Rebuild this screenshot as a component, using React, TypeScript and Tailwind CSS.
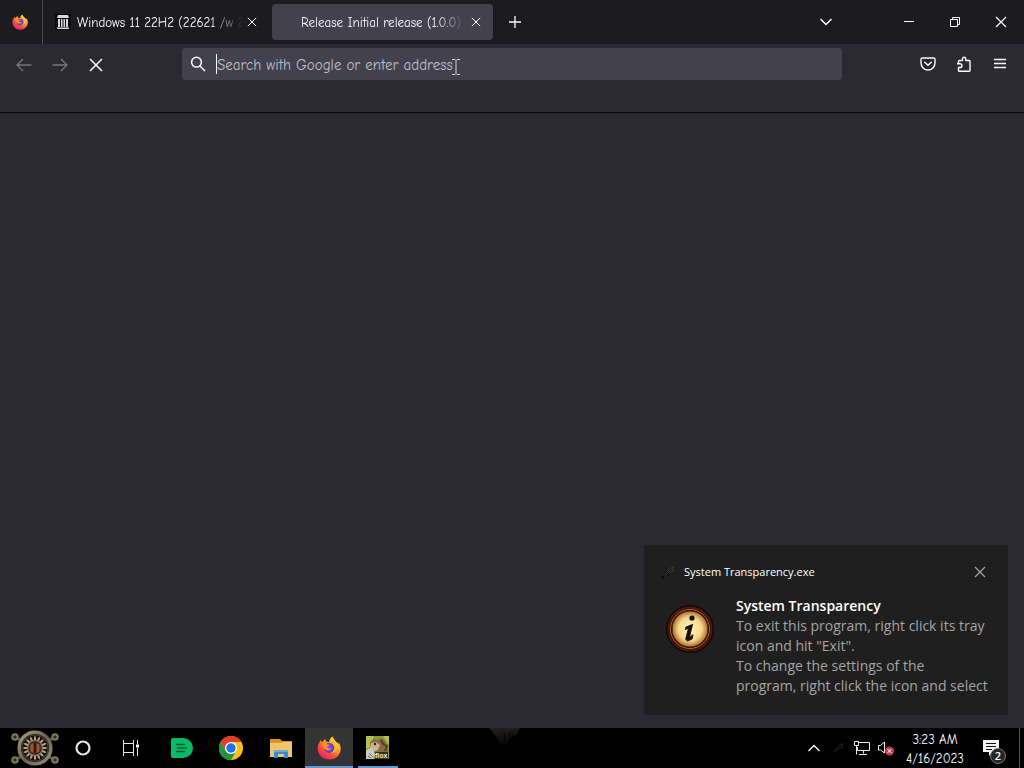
import React, { type ReactNode } from "react";

const cogTeeth = Array.from({ length: 16 }, (_, i) => i * 22.5);

function FirefoxLogo({ id, className }: { id: string; className: string }) {
  return (
    <svg viewBox="0 0 24 24" className={className} aria-hidden="true">
      <defs>
        <linearGradient id={`${id}-flame`} x1="0.85" y1="0.05" x2="0.2" y2="0.95">
          <stop offset="0" stopColor="#ffe545" />
          <stop offset="0.35" stopColor="#ffa52c" />
          <stop offset="0.65" stopColor="#fb5637" />
          <stop offset="1" stopColor="#e61f6b" />
        </linearGradient>
        <radialGradient id={`${id}-globe`}>
          <stop offset="0" stopColor="#8a52e8" />
          <stop offset="1" stopColor="#5a3cc4" />
        </radialGradient>
      </defs>
      <path
        d="M15.3.6c1.3 2 2 3 3 4.100 1.300 1.300 2.400 2 3.200 3.300.3-.6.200-1.200 0-1.800 1.500 1.900 2.200 4.300 2.200 6.500 0 6-5 10.800-11.500 10.800C5.700 23.500.700 18.700.700 12.700c0-2.700.7-5 2.100-6.600l.4-2 1.500 1.700 1.400-.3C6.500 4.300 7.300 3.400 8.300 2.700c-.1 1.500.5 2.600 1.700 3.100l2 .5C12.500 4 13.300 2 15.300.6Z"
        fill={`url(#${id}-flame)`}
      />
      <circle cx="12.200" cy="12" r="5" fill={`url(#${id}-globe)`} />
      <path
        d="M4.500 8.500c1.500-1.300 3.800-1.500 5.600-.3l2.500.5c-.2 1.300-1.900 1.500-2.400 2.400.2 1.600 2.700 1.700 4.200.9-.8 2.200-3.200 3-5.200 2.100-2.700-1-3.300-3.800-4.700-5.600Z"
        fill="#ff8b29"
      />
      <path
        d="M14 6.500c2.800.5 4.600 3.200 3.800 6.100-.5 2.300-2.200 3.700-4.200 4.300 3.500.2 6.500-2 7-5.600.4-3.200-1.600-5.400-4-7.200Z"
        fill="#ffc633"
        opacity="0.75"
      />
    </svg>
  );
}

function ChromeLogo() {
  return (
    <svg viewBox="0 0 24 24" className="size-6" aria-hidden="true">
      <circle cx="12" cy="12" r="12" fill="#fbc116" />
      <path d="M12 6h10.400A12 12 0 0 0 1.600 6l5.200 9Z" fill="#e33b2e" />
      <path d="M1.600 6A12 12 0 0 0 12 24l5.200-9L12 17l-5.200-2Z" fill="#229342" />
      <circle cx="12" cy="12" r="6" fill="#fff" />
      <circle cx="12" cy="12" r="4.700" fill="#1a73e8" />
    </svg>
  );
}

function StartEmblem() {
  return (
    <svg viewBox="0 0 50 38" className="h-[38px] w-[50px]" aria-hidden="true">
      <defs>
        <linearGradient id="brass" x1="0" y1="0" x2="1" y2="1">
          <stop offset="0" stopColor="#aaa088" />
          <stop offset="0.5" stopColor="#685f4e" />
          <stop offset="1" stopColor="#9a9078" />
        </linearGradient>
      </defs>
      <path d="m5 8 40 23M45 8 5 31" stroke="#554d3b" strokeWidth="3" />
      {[[5, 8], [45, 8], [5, 31], [45, 31]].map(([x, y]) => (
        <g key={`${x}-${y}`}>
          <circle cx={x} cy={y} r="3.800" fill="#777455" />
          <circle cx={x} cy={y} r="2.300" fill="#273323" stroke="#8f8a5e" />
        </g>
      ))}
      <circle cx="25" cy="19" r="15.800" fill="#17120d" stroke="url(#brass)" strokeWidth="3.500" />
      <circle cx="25" cy="19" r="13.200" fill="none" stroke="#4c453a" />
      {cogTeeth.map((angle) => (
        <path key={angle} d="m24 8.500 1-2 1 2v3.500h-2Z" fill="#b5a88a" transform={`rotate(${angle} 25 19)`} />
      ))}
      <circle cx="25" cy="19" r="7.500" fill="#241b14" stroke="#85765c" strokeWidth="1.500" />
      <circle cx="25" cy="19" r="5.800" fill="#7c3d27" />
      <path d="M22 15v8M28 15v8" stroke="#a45e3e" strokeWidth="1.500" />
      <path d="M25 13.500v11" stroke="#2c1812" strokeWidth="2" />
    </svg>
  );
}

function InfoBadge() {
  return (
    <svg viewBox="0 0 50 50" className="size-[50px]" aria-hidden="true">
      <defs>
        <radialGradient id="parchment">
          <stop offset="0" stopColor="#fff6be" />
          <stop offset="0.65" stopColor="#f5d88a" />
          <stop offset="1" stopColor="#ab6c2d" />
        </radialGradient>
      </defs>
      <circle cx="25" cy="25" r="24" fill="#120706" />
      <circle cx="25" cy="25" r="21.500" fill="#2b0d05" stroke="#4a1a0d" strokeWidth="2" />
      <circle cx="25" cy="25" r="19.500" fill="none" stroke="#b0672f" />
      <circle cx="25" cy="25" r="18" fill="url(#parchment)" stroke="#43190a" />
      <circle cx="27" cy="14" r="2.600" fill="#1b1009" />
      <path d="m21 23 6.500-2.500-3.200 13.200 3.700-3-1 4.300-4.500 2-1.800-1.700 2.800-11.100-3.200 1.200Z" fill="#1b1009" stroke="#1b1009" strokeWidth="1" strokeLinejoin="round" />
    </svg>
  );
}

function Wrench({ className }: { className: string }) {
  return (
    <svg viewBox="0 0 16 16" className={className} aria-hidden="true">
      <path d="m2.500 13 5-4" stroke="#080808" strokeWidth="3" strokeLinecap="round" />
      <path d="m3 12 5-4.500 1.500-3L14 3l-2.500 3 2 1-3 1.500L9 8l-5 5" fill="none" stroke="#3a3a3a" />
    </svg>
  );
}

function Cross({ className }: { className: string }) {
  return (
    <svg viewBox="0 0 12 12" className={className} fill="none" stroke="currentColor" strokeWidth="1.200" aria-hidden="true">
      <path d="m1 1 10 10M11 1 1 11" />
    </svg>
  );
}

function IconButton({ label, className, children }: { label: string; className: string; children: ReactNode }) {
  return (
    <button type="button" aria-label={label} className={`flex shrink-0 items-center justify-center ${className}`}>
      {children}
    </button>
  );
}

function TabStrip() {
  return (
    <header className="flex h-11 shrink-0 items-center bg-[#1c1b20] text-[#fbfbfe]">
      <IconButton label="Firefox View" className="h-11 w-10">
        <FirefoxLogo id="view" className="size-4" />
      </IconButton>
      <div className="ml-0.5 h-11 w-px shrink-0 bg-[#4c4b52]" />
      <div className="ml-1 flex h-9 w-[221px] shrink-0 items-center pl-2">
        <svg viewBox="0 0 16 16" className="size-4 shrink-0" aria-hidden="true">
          <path fill="#09090b" d="M0 0h16v16H0z" />
          <path fill="#d8d8da" d="M3 1h10l1 3H2ZM3 5h2v8H3ZM6 5h1.500v8H6ZM8.500 5H10v8H8.500ZM11 5h2v8h-2ZM2 13.500h12V15H2Z" />
        </svg>
        <span className="ml-1.5 w-[167px] overflow-hidden pt-0.5 text-[13px] font-medium whitespace-nowrap [mask-image:linear-gradient(to_right,black_78%,transparent)]">
          Windows 11 22H2 (22621 /w 2
        </span>
        <IconButton label="Close tab" className="size-4"><Cross className="size-2.5" /></IconButton>
      </div>
      <div className="ml-1 flex h-9 w-[221px] shrink-0 items-center rounded bg-[#42414d] pl-[29px]">
        <span className="w-[165px] overflow-hidden pt-0.5 text-[13px] font-medium whitespace-nowrap [mask-image:linear-gradient(to_right,black_82%,transparent)]">
          Release Initial release (1.0.0)
        </span>
        <IconButton label="Close tab" className="size-5"><Cross className="size-2.5" /></IconButton>
      </div>
      <IconButton label="New tab" className="ml-1 size-9">
        <svg viewBox="0 0 12 12" className="size-3" stroke="currentColor" aria-hidden="true"><path d="M6 0v12M0 6h12" strokeWidth="1.300" /></svg>
      </IconButton>
      <div className="flex-1" />
      <IconButton label="List all tabs" className="mr-[42px] size-9">
        <svg viewBox="0 0 12 8" className="h-2 w-3" fill="none" stroke="currentColor" strokeWidth="1.500" aria-hidden="true"><path d="m.5 1 5.500 5.500L11.500 1" /></svg>
      </IconButton>
      <IconButton label="Minimize" className="h-11 w-[46px]">
        <svg viewBox="0 0 10 10" className="size-2.5" stroke="currentColor" aria-hidden="true"><path d="M0 4.500h10" /></svg>
      </IconButton>
      <IconButton label="Restore" className="h-11 w-[46px]">
        <svg viewBox="0 0 10 10" className="size-2.5" fill="none" stroke="currentColor" aria-hidden="true"><path d="M.5 2.500h7v7h-7ZM2.500 2.500v-2h7v7h-2" /></svg>
      </IconButton>
      <IconButton label="Close" className="h-11 w-[46px]"><Cross className="size-3" /></IconButton>
    </header>
  );
}

function Toolbar() {
  return (
    <nav className="flex h-[69px] shrink-0 items-start border-b border-[#09090b] bg-[#2b2a33] px-1.5 pt-1 text-[#fbfbfe]">
      <IconButton label="Back" className="h-[34px] w-9 text-[#77767d]">
        <svg viewBox="0 0 16 16" className="size-4" fill="none" stroke="currentColor" strokeWidth="1.300" aria-hidden="true"><path d="M15.500 8H1M7 2 1 8l6 6" /></svg>
      </IconButton>
      <IconButton label="Forward" className="h-[34px] w-9 text-[#77767d]">
        <svg viewBox="0 0 16 16" className="size-4" fill="none" stroke="currentColor" strokeWidth="1.300" aria-hidden="true"><path d="M.5 8H15M9 2l6 6-6 6" /></svg>
      </IconButton>
      <IconButton label="Stop" className="h-[34px] w-9">
        <svg viewBox="0 0 14 14" className="size-3.5" stroke="currentColor" strokeWidth="1.500" aria-hidden="true"><path d="m1 1 12 12M13 1 1 13" /></svg>
      </IconButton>
      <div className="relative mr-[68px] ml-[68px] flex h-8 min-w-0 flex-1 items-center rounded bg-[#42414d] pl-2">
        <svg viewBox="0 0 16 16" className="size-4 shrink-0" fill="none" stroke="currentColor" strokeWidth="1.500" aria-hidden="true"><circle cx="6.500" cy="6.200" r="4.900" /><path d="m10 10 5 5" /></svg>
        <span className="ml-2.5 h-5 w-px shrink-0 bg-white" />
        <input
          type="text"
          aria-label="Search with Google or enter address"
          placeholder="Search with Google or enter address"
          className="h-8 min-w-0 flex-1 bg-transparent pt-0.5 text-[15px] font-medium outline-none placeholder:text-[#bfbec5]"
        />
        <svg viewBox="0 0 8 16" className="absolute top-[11px] left-[270px] h-4 w-2" fill="none" stroke="#d4d3d8" aria-hidden="true"><path d="M0 .5h3l1 1 1-1h3M4 1.500v13M0 15.500h3l1-1 1 1h3" /></svg>
      </div>
      <IconButton label="Save to Pocket" className="h-8 w-9">
        <svg viewBox="0 0 16 16" className="size-4" fill="none" stroke="currentColor" strokeWidth="1.400" strokeLinejoin="round" strokeLinecap="round" aria-hidden="true"><path d="M2.300 2h11.400q1.300 0 1.300 1.300V7a7 7 0 0 1-14 0V3.300Q1 2 2.300 2ZM4.700 6.300 8 9.300l3.300-3" /></svg>
      </IconButton>
      <IconButton label="Extensions" className="h-8 w-9">
        <svg viewBox="0 0 16 16" className="size-4" fill="none" stroke="currentColor" strokeWidth="1.400" strokeLinejoin="round" aria-hidden="true"><path d="M2.500 7.500V5.300q0-.8.800-.8H6.500V2.800a1.600 1.600 0 0 1 3.200 0v1.700h3.500q.8 0 .8.800v9q0 .900-.8.900H3.300q-.8 0-.8-.8V11.500h1.600a1.800 1.800 0 0 0 0-3.700H1" /></svg>
      </IconButton>
      <IconButton label="Application menu" className="h-8 w-9">
        <svg viewBox="0 0 12 12" className="size-3" stroke="currentColor" aria-hidden="true"><path d="M0 1.500h12M0 5.500h12M0 9.500h12" strokeWidth="1.300" /></svg>
      </IconButton>
    </nav>
  );
}

function Notification() {
  return (
    <aside className="absolute right-4 bottom-[13px] h-[170px] w-[364px] bg-[#1f1f1f] px-4 pt-4 font-['Segoe_UI','Open_Sans',sans-serif]">
      <div className="flex h-[22px] items-center">
        <Wrench className="size-4" />
        <span className="ml-2 flex-1 text-[11px] text-white">System Transparency.exe</span>
        <IconButton label="Dismiss" className="size-6 text-[#a7a7a7]"><Cross className="size-3" /></IconButton>
      </div>
      <div className="mt-[13px] flex">
        <div className="mt-2 ml-[5px] shrink-0"><InfoBadge /></div>
        <div className="ml-[21px] text-[14px] leading-5 whitespace-nowrap text-[#a5a5a5]">
          <h2 className="font-semibold text-white">System Transparency</h2>
          <p>To exit this program, right click its tray<br />icon and hit "Exit".</p>
          <p>To change the settings of the<br />program, right click the icon and select</p>
        </div>
      </div>
    </aside>
  );
}

function Taskbar() {
  return (
    <footer className="relative flex h-10 shrink-0 items-center bg-black text-white">
      <svg viewBox="0 0 34 24" className="absolute top-0 left-[489px] h-6 w-[34px]" aria-hidden="true">
        <defs>
          <linearGradient id="paw" x1="0" y1="0" x2="0.3" y2="1">
            <stop offset="0" stopColor="#26221e" />
            <stop offset="1" stopColor="#050404" />
          </linearGradient>
        </defs>
        <path d="M0 0h31l-3 7-7 3-5 9-4-3L5 6Z" fill="url(#paw)" />
        <path d="m15 5 1 13M22 2l-2 7" stroke="#060504" />
      </svg>
      <IconButton label="Start" className="h-10 w-[62px] pl-2"><StartEmblem /></IconButton>
      <IconButton label="Cortana" className="h-10 w-[42px]">
        <svg viewBox="0 0 16 16" className="size-4" aria-hidden="true"><circle cx="8" cy="8" r="6.500" fill="none" stroke="#e6e6e6" strokeWidth="2.200" /></svg>
      </IconButton>
      <IconButton label="Task view" className="ml-[3px] h-10 w-12">
        <svg viewBox="0 0 18 16" className="h-4 w-[18px]" fill="none" stroke="#e8e8e8" aria-hidden="true"><path d="M1.500 0v3.500h10V0M1.500 16v-3.500h10V16M1.500 3.500v9M11.500 3.500v9M15.500 0v4M15.500 8v8" /><path d="M14 4.500h3v3h-3Z" fill="#fff" stroke="none" /></svg>
      </IconButton>
      <IconButton label="Notes" className="ml-[3px] h-10 w-12">
        <svg viewBox="0 0 22 20" className="h-5 w-[22px]" aria-hidden="true"><path d="M2 0h10a10 10 0 0 1 0 20H2q-2 0-2-2V2Q0 0 2 0Z" fill="#08b966" /><path d="M5 6.500h9M6 10h10M5 13.500h9" stroke="#075e36" strokeWidth="1.600" /></svg>
      </IconButton>
      <IconButton label="Google Chrome" className="h-10 w-[50px]"><ChromeLogo /></IconButton>
      <IconButton label="File Explorer" className="h-10 w-[49px]">
        <svg viewBox="0 0 22 20" className="h-5 w-[22px]" aria-hidden="true"><path d="M0 1h10l2 2h10v16H0Z" fill="#d99520" /><path d="M0 5h11l2-1h9v15H0Z" fill="#f0c56b" /><path d="M4 12h14v8h-4v-4H8v4H4Z" fill="#378dcc" /><path d="M4 12h14v2H4Z" fill="#62afd9" /></svg>
      </IconButton>
      <IconButton label="Firefox" className="h-10 w-12 border-b-2 border-[#6498d0] bg-[#343434] pt-0.5"><FirefoxLogo id="task" className="size-6" /></IconButton>
      <IconButton label="Squirrel box" className="ml-[5px] h-10 w-10 border-b-2 border-[#6498d0] pr-0.5">
        <svg viewBox="0 0 23 23" className="size-[23px]" aria-hidden="true">
          <path d="M0 0h23v23H0Z" fill="#8a973c" />
          <path d="M0 0h8L3 12H0ZM17 0h6v9Z" fill="#b4bd50" />
          <path d="m4 6 4-3 4 1 3-2 4 3 3 7v9H8l-4-8Z" fill="#8b6941" />
          <path d="m5 7 5-1 4 3-2 5-5 2-3-4Z" fill="#c9b48c" />
          <path d="M0 15q2-4 7-2l2 6-2 4H0Z" fill="#c8cdc8" />
          <circle cx="9" cy="8" r="1.200" fill="#242014" />
          <path d="m15 4 2 4 4 2-2 5" fill="none" stroke="#53402b" strokeWidth="2" />
          <path d="m3 17 4 4M2 20l3 2" stroke="#5d6667" />
          <path d="M9 16h13v7H9Z" fill="#382d20" />
          <text x="9" y="22" fontSize="7" fontWeight="bold" fill="#f5f0dd" className="font-['Liberation_Sans',sans-serif]">flox</text>
        </svg>
      </IconButton>
      <div className="flex-1" />
      <IconButton label="Show hidden icons" className="h-10 w-6">
        <svg viewBox="0 0 12 8" className="h-2 w-3" fill="none" stroke="currentColor" strokeWidth="1.300" aria-hidden="true"><path d="M.5 7 6 1.500 11.500 7" /></svg>
      </IconButton>
      <IconButton label="System Transparency" className="h-10 w-6"><Wrench className="size-3.5 opacity-60" /></IconButton>
      <IconButton label="Network" className="h-10 w-6">
        <svg viewBox="0 0 16 14" className="h-3.5 w-4" fill="none" stroke="#eee" aria-hidden="true"><path d="M5 1.500h10.500v8H3.500V6M.5.500h4v4h-4ZM2.500 4.500v9M9.500 9.500v3M5 13.500h8" /></svg>
      </IconButton>
      <IconButton label="Volume" className="h-10 w-6">
        <svg viewBox="0 0 18 16" className="h-4 w-[18px]" fill="none" aria-hidden="true"><path d="M1.500 5.500h2L7.500 2v11l-4-3h-2Z" stroke="#eee" /><circle cx="12.500" cy="11" r="4.500" fill="#c33a50" /><path d="m10.500 9 4 4M14.500 9l-4 4" stroke="#fff" /></svg>
      </IconButton>
      <button type="button" className="flex h-10 w-[74px] shrink-0 flex-col items-center pt-0.5 text-[13px] leading-[19px] font-medium">
        <span>3:23 AM</span>
        <span>4/16/2023</span>
      </button>
      <IconButton label="2 new notifications" className="relative mr-px h-10 w-[46px] pr-2">
        <svg viewBox="0 0 16 16" className="size-4" aria-hidden="true"><path d="M0 0h16v12h-6l-4 4v-4H0Z" fill="#f4f4f4" /><path d="M3 3.500h10M3 6.500h10M3 9.500h6" stroke="#111" /></svg>
        <span className="absolute right-3 bottom-1 flex size-4 items-center justify-center rounded-full border border-[#777] bg-[#262626] font-['Open_Sans',sans-serif] text-[11px] leading-4 font-semibold">2</span>
      </IconButton>
      <div className="h-10 w-[5px] shrink-0 border-l border-[#555]" />
    </footer>
  );
}

export default function App() {
  return (
    <div className="flex min-h-screen flex-col overflow-hidden bg-[#2b2a33] font-['Comic_Neue','Lato',sans-serif]">
      <TabStrip />
      <Toolbar />
      <main className="relative flex-1"><Notification /></main>
      <Taskbar />
    </div>
  );
}
